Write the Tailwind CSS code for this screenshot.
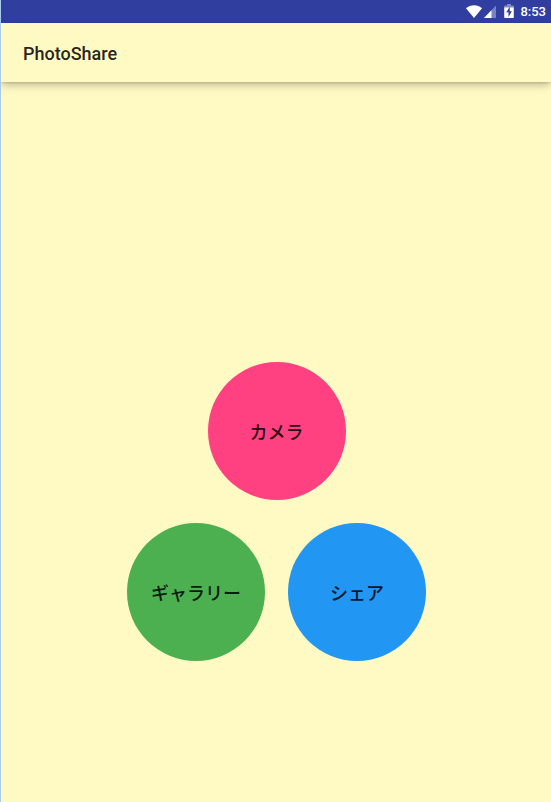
<!DOCTYPE html>
<html lang="ja">
<head>
<meta charset="utf-8">
<meta name="viewport" content="width=device-width, initial-scale=1">
<title>PhotoShare</title>
<script src="https://cdn.jsdelivr.net/npm/@tailwindcss/browser@4"></script>
</head>
<body class="flex min-h-screen flex-col border-l border-[#a9cbee] bg-[#fff9c4] font-[Roboto,'Noto_Sans_CJK_JP',sans-serif] text-black/87">
  <div class="flex h-[23px] items-center justify-end bg-[#303f9f] pr-[5px] text-white">
    <svg class="h-[23px] w-4" viewBox="0 0 16 23" fill="currentColor" aria-hidden="true"><path d="M8 18 0 8.2C2.2 6.3 5 5.2 8 5.2s5.800 1.100 8 3z"/></svg>
    <svg class="ml-[2px] h-[23px] w-3" viewBox="0 0 12 23" fill="currentColor" aria-hidden="true"><path opacity=".35" d="M0 18 12 5.500V18z"/><path d="M0 18 7.500 10.200V18z"/></svg>
    <svg class="ml-2 h-[23px] w-[10px]" viewBox="0 0 10 23" aria-hidden="true"><path fill="currentColor" opacity=".4" d="M3 4h4v1.500h2q.8 0 .8.800V8H.2V6.300q0-.8.800-.8h2z"/><path fill="currentColor" d="M.2 7.500h9.600v9.700q0 .8-.8.800H1q-.8 0-.8-.8z"/><path fill="#303f9f" d="M5.800 6.800 2.200 12.300h2.300V17l3.400-5.700H5.800z"/></svg>
    <time class="ml-[6px] text-[13px] leading-[23px] font-medium">8:53</time>
  </div>
  <header class="flex h-[59px] items-center px-[22px] pt-[2px] shadow-[0_1px_2px_rgba(0,0,0,0.12),0_4px_8px_-1px_rgba(0,0,0,0.25)]">
    <h1 class="text-[18px] leading-6 font-medium">PhotoShare</h1>
  </header>
  <main class="flex flex-1 flex-col items-center justify-end gap-[23px] pb-[141px] pl-px">
    <button type="button" class="size-[138px] rounded-full bg-[#ff4081] pt-[4px] text-[18px] leading-6 font-medium">カメラ</button>
    <div class="flex gap-[23px]">
      <button type="button" class="size-[138px] rounded-full bg-[#4caf50] pt-[4px] text-[18px] leading-6 font-medium">ギャラリー</button>
      <button type="button" class="size-[138px] rounded-full bg-[#2196f3] pt-[4px] text-[18px] leading-6 font-medium">シェア</button>
    </div>
  </main>
</body>
</html>
